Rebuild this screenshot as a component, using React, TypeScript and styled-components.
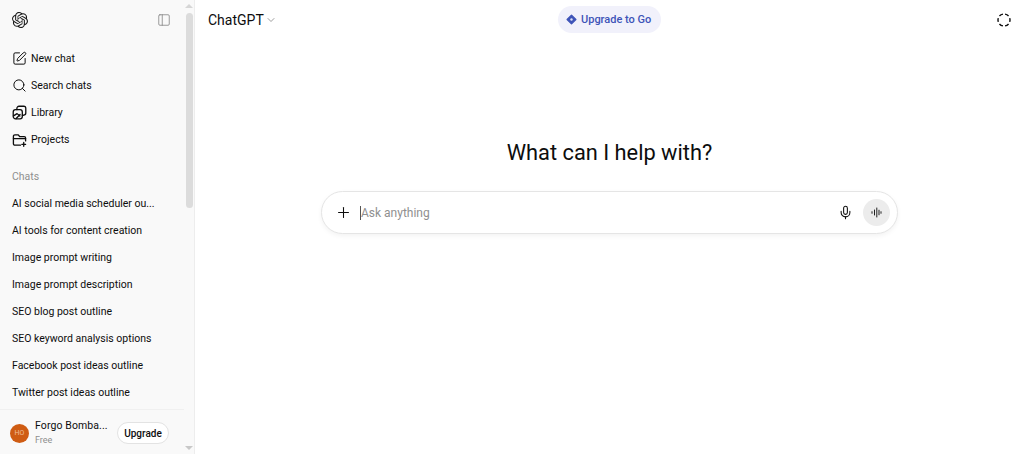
import React from "react";
import styled, { createGlobalStyle } from "styled-components";
import { SiOpenai } from "react-icons/si";
import { PanelLeft, SquarePen, Search, ChevronDown, Plus, Mic } from "lucide-react";

const Global = createGlobalStyle`
  html, body { margin: 0; padding: 0; height: 100%; background: #fff; overflow: hidden; }
  body { font-family: "Roboto", "Open Sans", sans-serif; color: #0d0d0d; }
  #root { height: 100%; }
`;

const Page = styled.div`
  display: flex;
  width: 1024px;
  height: 454px;
  overflow: hidden;
`;
const Sidebar = styled.aside`
  display: flex;
  width: 195px;
  height: 454px;
  flex: none;
  background: #f9f9f9;
  border-right: 1px solid #ededed;
  box-sizing: border-box;
`;
const SideContent = styled.div`
  flex: 1;
  min-width: 0;
  display: flex;
  flex-direction: column;
`;
const SideTop = styled.div`
  display: flex;
  align-items: center;
  justify-content: space-between;
  height: 39px;
  padding: 0 13px 0 12px;
  flex: none;
`;
const Nav = styled.nav`
  display: flex;
  flex-direction: column;
  margin-top: 6px;
`;
const NavRow = styled.div`
  display: flex;
  align-items: center;
  gap: 4px;
  height: 27px;
  padding-left: 12px;
  font-size: 10.5px;
  color: #0d0d0d;
`;
const ChatsLabel = styled.div`
  height: 27px;
  margin-top: 9px;
  padding: 1px 0 0 12px;
  box-sizing: border-box;
  display: flex;
  align-items: center;
  font-size: 10.5px;
  color: #8f8f8f;
`;
const ChatRow = styled.div`
  display: flex;
  align-items: center;
  height: 27px;
  padding: 1px 0 0 12px;
  box-sizing: border-box;
  font-size: 10.5px;
  color: #0d0d0d;
  white-space: nowrap;
`;
const Footer = styled.div`
  margin-top: auto;
  height: 45px;
  flex: none;
  display: flex;
  align-items: center;
  border-top: 1px solid #f0f0f0;
  padding: 2px 0 0 10px;
  box-sizing: border-box;
`;
const Avatar = styled.div`
  width: 19px;
  height: 19px;
  border-radius: 50%;
  background: #cf5c13;
  color: #f0bd98;
  font-size: 7px;
  display: flex;
  align-items: center;
  justify-content: center;
  flex: none;
`;
const UserInfo = styled.div`
  width: 73px;
  margin-left: 6px;
  display: flex;
  flex-direction: column;
  line-height: 14px;
`;
const UserName = styled.div`
  font-size: 10.5px;
  letter-spacing: 0.1px;
  color: #0d0d0d;
  white-space: nowrap;
`;
const Plan = styled.div`
  font-size: 9px;
  color: #8f8f8f;
`;
const UpgradeBtn = styled.div`
  margin-left: 9px;
  width: 52px;
  height: 22px;
  box-sizing: border-box;
  border: 1px solid #e3e3e3;
  border-radius: 11px;
  background: #fff;
  font-size: 10px;
  font-weight: 500;
  display: flex;
  align-items: center;
  justify-content: center;
`;
const ScrollTrack = styled.div`
  width: 10px;
  flex: none;
  display: flex;
  flex-direction: column;
  align-items: center;
  padding: 4px 0;
  box-sizing: border-box;
`;
const Arrow = styled.div<{ $down?: boolean }>`
  width: 0;
  height: 0;
  border-left: 4px solid transparent;
  border-right: 4px solid transparent;
  ${(p) => (p.$down ? "border-top: 4px solid #c8c8c8; margin-top: auto;" : "border-bottom: 4px solid #d6d6d6;")}
`;
const Thumb = styled.div`
  width: 7px;
  height: 195px;
  margin-top: 5px;
  border-radius: 4px;
  background: #dcdcdc;
`;
const Main = styled.main`
  flex: 1;
  min-width: 0;
  display: flex;
  flex-direction: column;
  background: #fff;
`;
const Header = styled.header`
  display: grid;
  grid-template-columns: 1fr auto 1fr;
  align-items: center;
  height: 39px;
  padding: 0 13px;
  flex: none;
`;
const Brand = styled.div`
  display: flex;
  align-items: center;
  gap: 1px;
  font-size: 14px;
  color: #0d0d0d;
`;
const GoPill = styled.div`
  display: flex;
  align-items: center;
  gap: 4px;
  height: 27px;
  width: 103px;
  box-sizing: border-box;
  padding-left: 8px;
  border-radius: 14px;
  background: #f1f1fb;
  color: #3e54b8;
  font-size: 11px;
  font-weight: 500;
  white-space: nowrap;
`;
const HeaderEnd = styled.div`
  display: flex;
  justify-content: flex-end;
`;
const Hero = styled.div`
  display: flex;
  flex-direction: column;
  align-items: center;
  padding-top: 97px;
`;
const Title = styled.h1`
  margin: 0;
  height: 34px;
  line-height: 34px;
  font-size: 21.8px;
  font-weight: 400;
  color: #0d0d0d;
`;
const Composer = styled.div`
  margin-top: 21px;
  width: 577px;
  height: 43px;
  box-sizing: border-box;
  display: flex;
  align-items: center;
  padding: 0 7px 0 13px;
  border: 1px solid #e5e5e5;
  border-radius: 22px;
  background: #fff;
  box-shadow: 0 2px 5px rgba(0, 0, 0, 0.05);
`;
const Caret = styled.div`
  width: 1px;
  height: 14px;
  margin-left: 8px;
  background: #555;
`;
const Placeholder = styled.span`
  flex: 1;
  font-size: 12px;
  color: #8f8f8f;
`;
const VoiceBtn = styled.div`
  margin-left: 10px;
  width: 27px;
  height: 27px;
  border-radius: 50%;
  background: #ececec;
  display: flex;
  align-items: center;
  justify-content: center;
`;

const chats = [
  "AI social media scheduler ou...",
  "AI tools for content creation",
  "Image prompt writing",
  "Image prompt description",
  "SEO blog post outline",
  "SEO keyword analysis options",
  "Facebook post ideas outline",
  "Twitter post ideas outline",
];

type IconProps = { size?: number };

const ProjectsIcon = ({ size = 15 }: IconProps) => (
  <svg width={size} height={size} viewBox="0 0 16 16" fill="none" stroke="#0d0d0d" strokeWidth="1.4" strokeLinecap="round" strokeLinejoin="round">
    <path d="M14.5 9.5V6.5A1.5 1.5 0 0 0 13 5H8.2L6.7 3H3A1.5 1.5 0 0 0 1.5 4.5v8A1.5 1.5 0 0 0 3 14h6" />
    <path d="M1.5 7h13" />
    <path d="M12.5 11.2v4" />
    <path d="M10.5 13.2h4" />
  </svg>
);

const LibraryIcon = ({ size = 15 }: IconProps) => (
  <svg width={size} height={size} viewBox="0 0 16 16" fill="none" stroke="#0d0d0d" strokeWidth="1.4" strokeLinecap="round" strokeLinejoin="round">
    <rect x="1.3" y="5" width="9.7" height="9.7" rx="2.4" />
    <path d="M5.2 5V3.6A2.3 2.3 0 0 1 7.5 1.3h5a2.3 2.3 0 0 1 2.2 2.3v5a2.3 2.3 0 0 1-2.2 2.3H11" />
    <path d="M1.6 11.6 5.4 9.2l3 2.6" />
    <path d="M4.4 14.4 8.6 10.2" />
  </svg>
);

const nav = [
  { label: "New chat", Icon: SquarePen },
  { label: "Search chats", Icon: Search },
  { label: "Library", Icon: LibraryIcon },
  { label: "Projects", Icon: ProjectsIcon },
];

const Diamond = () => (
  <svg width="11" height="11" viewBox="0 0 12 12">
    <path d="M6 1.2 10.8 6 6 10.8 1.2 6Z" fill="#3e54b8" stroke="#3e54b8" strokeWidth="1.4" strokeLinejoin="round" />
    <circle cx="6" cy="6" r="1.3" fill="#dfe3f7" />
  </svg>
);

const DashedCircle = () => (
  <svg width="14" height="14" viewBox="0 0 14 14" fill="none" stroke="#0d0d0d" strokeWidth="1.4">
    <circle cx="7" cy="7" r="6" pathLength={360} strokeDasharray="38 22" strokeDashoffset="-11" transform="rotate(-90 7 7)" />
  </svg>
);

const Bars = () => (
  <svg width="11" height="11" viewBox="0 0 11 11" fill="none" stroke="#222" strokeWidth="1" strokeLinecap="round">
    <path d="M1 4.7v1.6" />
    <path d="M3.5 3v5" />
    <path d="M5.8 1v9" />
    <path d="M8 3.2v4.6" />
    <path d="M10 4.7v1.6" />
  </svg>
);

export default function App() {
  return (
    <Page>
      <Global />
      <Sidebar>
        <SideContent>
          <SideTop>
            <SiOpenai size={16} color="#1a1a1a" />
            <PanelLeft size={14} color="#7d7d7d" strokeWidth={1.3} />
          </SideTop>
          <Nav>
            {nav.map(({ label, Icon }) => (
              <NavRow key={label}>
                <Icon size={15} strokeWidth={1.6} color="#0d0d0d" />
                {label}
              </NavRow>
            ))}
          </Nav>
          <ChatsLabel>Chats</ChatsLabel>
          {chats.map((c) => (
            <ChatRow key={c}>{c}</ChatRow>
          ))}
          <Footer>
            <Avatar>HO</Avatar>
            <UserInfo>
              <UserName>Forgo Bomba...</UserName>
              <Plan>Free</Plan>
            </UserInfo>
            <UpgradeBtn>Upgrade</UpgradeBtn>
          </Footer>
        </SideContent>
        <ScrollTrack>
          <Arrow />
          <Thumb />
          <Arrow $down />
        </ScrollTrack>
      </Sidebar>
      <Main>
        <Header>
          <Brand>
            ChatGPT
            <ChevronDown size={12} color="#7d7d7d" strokeWidth={1.5} />
          </Brand>
          <GoPill>
            <Diamond />
            Upgrade to Go
          </GoPill>
          <HeaderEnd>
            <DashedCircle />
          </HeaderEnd>
        </Header>
        <Hero>
          <Title>What can I help with?</Title>
          <Composer>
            <Plus size={17} color="#0d0d0d" strokeWidth={1.5} />
            <Caret />
            <Placeholder>Ask anything</Placeholder>
            <Mic size={15} color="#0d0d0d" strokeWidth={1.7} />
            <VoiceBtn>
              <Bars />
            </VoiceBtn>
          </Composer>
        </Hero>
      </Main>
    </Page>
  );
}
